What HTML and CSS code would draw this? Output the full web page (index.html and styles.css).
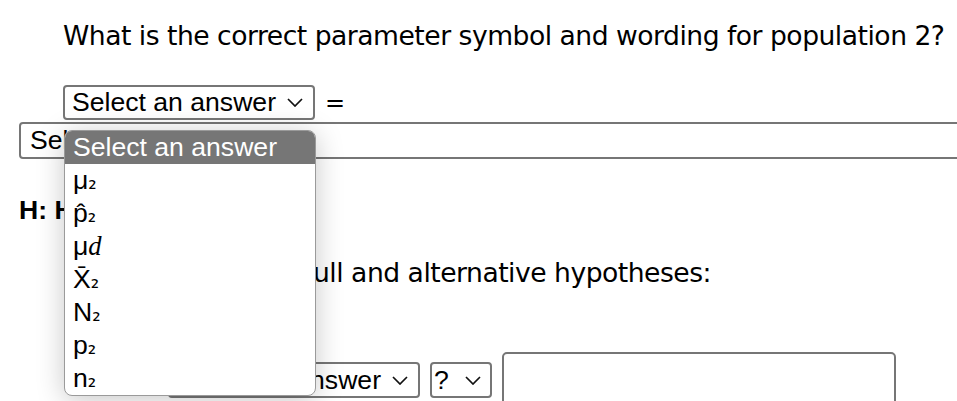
FILE: index.html
```html
<!DOCTYPE html>
<html lang="en">
<head>
    <meta charset="UTF-8">
    <meta name="viewport" content="width=device-width, initial-scale=1.0">
    <title>Parameter question</title>
    <link rel="stylesheet" href="styles.css">
</head>
<body>
    <div class="page">
        <p class="question">What is the correct parameter symbol and wording for population 2?</p>

        <div class="row">
            <div class="select sym">
                <span>Select an answer</span>
                <svg class="chev" width="16" height="9" viewBox="0 0 16 9"><polyline points="1,1 8,8 15,1" /></svg>
            </div>
            <span class="eq">=</span>
        </div>

        <div class="select wide">
            <span>Select an answer</span>
        </div>

        <p class="hyp-title">H: Hypotheses</p>

        <p class="prompt">Please write the null and alternative hypotheses:</p>

        <div class="row answer-row">
            <span class="lead">H<span class="sub">₀</span>:</span>
            <div class="select sym">
                <span>Select an answer</span>
                <svg class="chev" width="16" height="9" viewBox="0 0 16 9"><polyline points="1,1 8,8 15,1" /></svg>
            </div>
            <div class="select tiny">
                <span>?</span>
                <svg class="chev" width="16" height="9" viewBox="0 0 16 9"><polyline points="1,1 8,8 15,1" /></svg>
            </div>
            <div class="textbox"></div>
        </div>

        <!-- open options list of the first select -->
        <ul class="dropdown">
            <li class="active">Select an answer</li>
            <li>μ<span class="sub">₂</span></li>
            <li>p̂<span class="sub">₂</span></li>
            <li>μ<i class="var">d</i></li>
            <li>X̄<span class="sub">₂</span></li>
            <li>N<span class="sub">₂</span></li>
            <li>p<span class="sub">₂</span></li>
            <li>n<span class="sub">₂</span></li>
        </ul>
    </div>
</body>
</html>
```

FILE: styles.css
```css
html, body {
    margin: 0;
    overflow: hidden;
    background: #fff;
    color: #000;
}

.page {
    position: relative;
    padding: 20px 0 0 19px;
    font-family: "Liberation Sans", Arial, sans-serif;
    font-size: 26.6px;
}

.question,
.prompt {
    font-family: "DejaVu Sans", Verdana, sans-serif;
    font-size: 26.6px;
    letter-spacing: -0.5px;
    line-height: 31px;
    margin: 0;
}

.question {
    margin-left: 44px;
}

.row {
    display: flex;
    align-items: center;
    gap: 10px;
}

.row:first-of-type {
    margin: 34px 0 0 44px;
}

.select {
    box-sizing: border-box;
    display: flex;
    align-items: center;
    height: 35px;
    padding: 0 10px 0 7px;
    border: 2px solid #767676;
    border-radius: 4px;
    background: #fff;
    white-space: nowrap;
}

.select.sym {
    width: 252px;
}

.chev {
    margin-left: auto;
    fill: none;
    stroke: #111;
    stroke-width: 1.7;
}

.eq {
    font-family: "DejaVu Sans", Verdana, sans-serif;
    font-size: 24px;
}

.select.wide {
    width: 1000px;
    height: 37px;
    margin-top: 2px;
    padding-left: 9px;
}

.hyp-title {
    margin: 36px 0 0;
    font-weight: bold;
    line-height: 31px;
}

.prompt {
    margin: 31px 0 0 64px;
}

.answer-row {
    margin: 64px 0 0 51px;
}

.answer-row .select {
    height: 36px;
}

.lead {
    width: 88px;
}

.select.tiny {
    width: 62px;
    padding-left: 2px;
    padding-right: 9px;
}

.textbox {
    box-sizing: border-box;
    width: 394px;
    height: 56px;
    border: 2px solid #767676;
    border-radius: 5px;
}

.dropdown {
    position: absolute;
    top: 130px;
    left: 64px;
    width: 250px;
    margin: 0;
    padding: 0;
    list-style: none;
    background: #fff;
    border: 1px solid #9a9a9a;
    border-radius: 8px;
    overflow: hidden;
    box-shadow: 0 4px 28px rgba(0, 0, 0, 0.22);
}

.dropdown li {
    height: 33px;
    line-height: 33px;
    padding-left: 8px;
}

.dropdown li.active {
    background: #767676;
    color: #fff;
}

.sub {
    font-family: "DejaVu Sans", sans-serif;
    font-size: 21px;
}

.var {
    font-family: "Liberation Serif", "Times New Roman", serif;
}
```
